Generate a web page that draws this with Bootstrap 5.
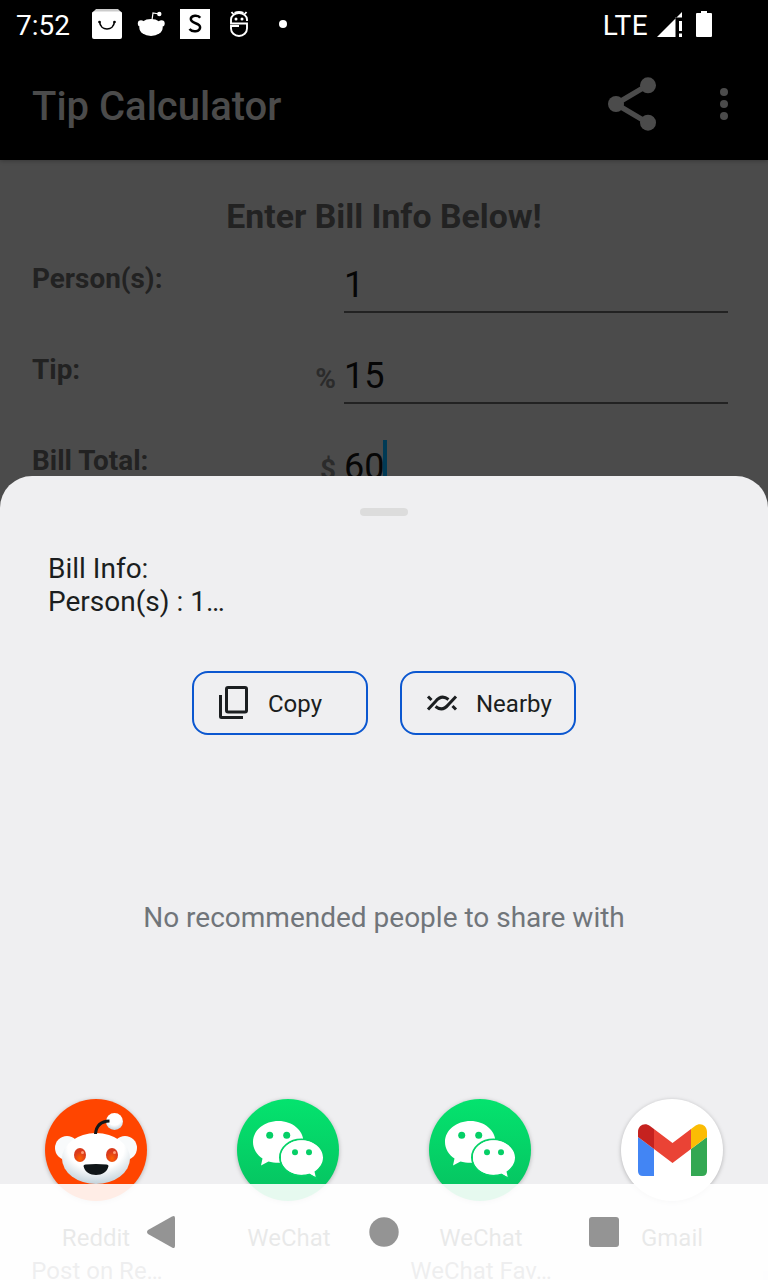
<!DOCTYPE html>
<html lang="en">
<head>
<meta charset="utf-8">
<meta name="viewport" content="width=device-width, initial-scale=1">
<title>Tip Calculator</title>
<link href="https://cdn.jsdelivr.net/npm/bootstrap@5.3.0/dist/css/bootstrap.min.css" rel="stylesheet">
<style>
body{font-family:Roboto,"Noto Sans",sans-serif;margin:0;background:#4b4b4b}
.screen{width:768px;height:1280px;background:#4b4b4b}
.status{height:48px;padding:0 56px 0 16px;font-size:28px;line-height:48px;background:#000}
.status span{padding-top:3px}
.status svg,.appbar svg{display:block;flex:none}
.clock{width:76px}
.network{margin-right:8px;letter-spacing:.4px}
.appbar{height:112px;padding:0 32px;background:#000;color:#4b4b4b;box-shadow:0 1px 4px rgba(0,0,0,.25)}
.appbar h1{font-size:40px;font-weight:500;line-height:48px;margin:6px 0 0}
.bill{padding:37px 40px 0 32px;color:#222}
.bill h2{font-size:33.800px;font-weight:700;line-height:40px;margin:0 -8px 0 0}
.fields{padding-top:6px}
.field{height:91px}
.field label{width:270px;font-size:27.900px;line-height:34px;font-weight:700;padding-top:19px}
.sym{width:42px;font-size:28px;font-weight:700;line-height:44px;padding:23px 8px 0 0;color:#2b2b2b}
.val{height:57px;border-bottom:2px solid #222;font-size:36px;line-height:44px;padding-top:7px;margin-top:13px;color:#060606}
.caret{width:4px;height:52px;background:#003a55;margin:-5px 0 0 -1px}
.sheet{top:476px;height:804px;background:#efeff1;border-radius:32px 32px 0 0;color:#1b1e20}
.grip{width:48px;height:8px;border-radius:4px;background:#dcdcdc;margin-top:32px}
.preview{margin:36px 48px 0;font-size:28px;line-height:33px}
.chips{margin-top:53px;gap:32px}
.chip{width:176px;height:64px;border:2px solid #0b57d0;border-radius:16px;background:none;color:#1b1e20;font-size:24px;line-height:30px;padding:0 0 0 24px;gap:18px}
.chip span{padding-top:2px}
.empty{margin-top:163px;font-size:28px;line-height:40px;color:#70757a}
.apps{margin-top:160px}
.app{width:192px;font-size:24px;line-height:33px;white-space:nowrap}
.app svg{display:block;margin-bottom:20px;overflow:visible;filter:drop-shadow(0 1px 2px rgba(0,0,0,.25))}
.wechat{padding-left:2px}
.sub{color:#50555a;line-height:18px;margin:7px 0 0 2px}
.navkeys{height:96px;background:rgba(255,255,255,.9)}
</style>
</head>
<body>
<main class="screen position-relative overflow-hidden">
  <header class="status d-flex align-items-center text-white">
    <span class="clock">7:52</span>
    <svg width="200" height="48" viewBox="92 0 200 48" fill="#fff">
      <path d="M96 9h22l4 4v7H92v-7z" fill="#ccc"/><rect x="92" y="11.500" width="30" height="27.500" rx="2"/>
      <path d="M99.500 21.500c1 10 14 10 15 0" fill="none" stroke="#000" stroke-width="1.700"/><circle cx="99.500" cy="22" r="1.300" fill="#000"/><circle cx="114.500" cy="22" r="1.300" fill="#000"/>
      <ellipse cx="151" cy="27.500" rx="11.700" ry="8.500"/><circle cx="141" cy="23.500" r="3.200"/><circle cx="161.500" cy="23.500" r="3.200"/><circle cx="159.300" cy="14" r="2.200"/><path d="M152 20l1-7 6 1" fill="none" stroke="#fff" stroke-width="1.200"/>
      <path d="M180 9h30v30h-30z"/><path d="M200.200 17.700c-2-3-9.400-2.700-9.400 1.400 0 5 9.300 3.400 9.300 8.200 0 4.800-8.100 5.100-10.600 1.800" fill="none" stroke="#000" stroke-width="2.500"/>
      <g fill="none" stroke="#fff" stroke-width="1.900"><path d="M239 26h-8v2.500a8 7.500 0 0 0 16 0v-5h-16v-4a8 6.500 0 0 1 16 0v1.500M231.500 12l2.500 3M246.500 12l-2.500 3M234.500 12.800q4.500-1.500 9 0"/></g><circle cx="236" cy="19" r="1.500"/><circle cx="242" cy="19" r="1.500"/>
      <circle cx="283" cy="24" r="4"/>
    </svg>
    <span class="network ms-auto">LTE</span>
    <svg width="56" height="48" viewBox="656 0 56 48" fill="#fff"><path d="M657 37l25-25v5.500h-6.500V37zM679 21h3v10h-3zM679 33.500h3V37h-3zM701 11h6v2h4q1 0 1 1v22q0 1-1 1h-14q-1 0-1-1V14q0-1 1-1h4z"/></svg>
  </header>
  <nav class="appbar d-flex align-items-center position-relative">
    <h1>Tip Calculator</h1>
    <svg class="ms-auto" width="128" height="64" viewBox="608 72 128 64" fill="#4b4b4b"><path d="M648 85l-32 19 32 19" fill="none" stroke="#4b4b4b" stroke-width="5.500"/><circle cx="648" cy="85.300" r="8"/><circle cx="616" cy="104" r="8"/><circle cx="648" cy="122.700" r="8"/><circle cx="724" cy="92" r="4"/><circle cx="724" cy="104" r="4"/><circle cx="724" cy="116" r="4"/></svg>
  </nav>
  <section class="bill">
    <h2 class="text-center">Enter Bill Info Below!</h2>
    <div class="fields">
      <div class="field d-flex align-items-start"><label>Person(s):</label><span class="sym"></span><div class="val flex-fill">1</div></div>
      <div class="field d-flex align-items-start"><label>Tip:</label><span class="sym text-end">%</span><div class="val flex-fill">15</div></div>
      <div class="field d-flex align-items-start"><label>Bill Total:</label><span class="sym text-end">$</span><div class="val flex-fill d-flex">60<i class="caret"></i></div></div>
    </div>
  </section>

  <section class="sheet position-absolute start-0 w-100 d-flex flex-column">
    <div class="grip align-self-center flex-shrink-0"></div>
    <div class="preview">Bill Info:<br>Person(s) : 1…</div>
    <div class="chips d-flex justify-content-center">
      <button class="chip d-flex align-items-center"><svg width="32" height="36" viewBox="0 0 32 36" fill="none" stroke="#1b1e20" stroke-width="3"><rect x="8.500" y="2.500" width="20" height="24.500" rx="1.500"/><path d="M2.500 10v21.500q0 1 1 1H25"/></svg><span>Copy</span></button>
      <button class="chip d-flex align-items-center"><svg width="32" height="32" viewBox="0 0 32 32" fill="none" stroke="#1b1e20" stroke-width="3"><path d="M2 22.500L9.500 14.500Q15.500 7 22.500 12.500M30 9.500L22.500 17.500Q16.500 25 9.500 19.500M2 9.500l3.500 3.500M26.500 19l3.500 3.500"/></svg><span>Nearby</span></button>
    </div>
    <p class="empty text-center mb-0">No recommended people to share with</p>
    <div class="apps d-flex text-center">
      <div class="app d-flex flex-column align-items-center">
        <svg width="104" height="104" viewBox="44 1098 104 104"><defs><radialGradient id="snoo" cx=".5" cy=".3" r=".75"><stop offset=".55" stop-color="#fff"/><stop offset="1" stop-color="#b9cbd5"/></radialGradient><radialGradient id="eye" cy=".75"><stop stop-color="#ff6100"/><stop offset="1" stop-color="#d93a1c"/></radialGradient></defs>
        <circle cx="96" cy="1150" r="51" fill="#ff4500"/><circle cx="67" cy="1148" r="12" fill="#f8fafb"/><circle cx="125" cy="1148" r="12" fill="#f8fafb"/><ellipse cx="96" cy="1158.500" rx="34" ry="25.500" fill="url(#snoo)"/><circle cx="114.500" cy="1121.500" r="8.500" fill="url(#snoo)"/><path d="M95.500 1134q1-12.500 14-13" fill="none" stroke="#111719" stroke-width="3"/><ellipse cx="80" cy="1155" rx="6" ry="7" fill="url(#eye)"/><ellipse cx="112" cy="1155" rx="6" ry="7" fill="url(#eye)"/><circle cx="82.500" cy="1152.500" r="1.500" fill="#ff9b75"/><circle cx="114.500" cy="1152.500" r="1.500" fill="#ff9b75"/><path d="M83.500 1166q0-1.500 2-1.500 10.500-.8 21 0 2 0 2 1.500c-2 12-23 12-25 0z" fill="#101618"/></svg>
        <span>Reddit</span><span class="sub">Post on Re…</span>
      </div>
      <div class="app d-flex flex-column align-items-center">
        <svg width="104" height="104" viewBox="236 1098 104 104"><defs><linearGradient id="wc" x2="0" y2="1"><stop stop-color="#04e36e"/><stop offset="1" stop-color="#06c160"/></linearGradient>
        <g id="bubbles"><circle cx="288" cy="1150" r="51" fill="url(#wc)"/><path d="M278.500 1121c-14 0-25.500 9-25.500 21 0 6.500 3.500 12.500 9.500 16.500l-1.500 7 7.500-4c3 1 6.500 1.300 10 1.300 14 0 25-9.300 25-20.800s-11-21-25-21z" fill="#fff"/><path d="M301.500 1139.500c-12 0-21.500 8-21.500 18s9.500 18 21.500 18c3 0 5.500-.4 8-1.200l6.500 3.700-1.300-6c5-3.300 8.300-8.500 8.300-14.500 0-10-9.500-18-21.500-18z" fill="#fff" stroke="#05d267" stroke-width="2"/><path d="M301.500 1140.300c-11.500 0-20.500 7.700-20.500 17.200s9 17.200 20.500 17.200c3 0 5.500-.4 8-1.200l6.200 3.500-1.200-5.500c5-3.300 8.500-8.300 8.500-14 0-9.500-10-17.200-21.500-17.200z" fill="#fff"/><g fill="#05cf66"><circle cx="269.700" cy="1135.300" r="3.500"/><circle cx="286.700" cy="1135.300" r="3.500"/><circle cx="295" cy="1152.300" r="3"/><circle cx="309" cy="1152.300" r="3"/></g></g></defs><use href="#bubbles"/></svg>
        <span class="wechat">WeChat</span>
      </div>
      <div class="app d-flex flex-column align-items-center">
        <svg width="104" height="104" viewBox="236 1098 104 104"><use href="#bubbles"/></svg>
        <span class="wechat">WeChat</span><span class="sub">WeChat Fav…</span>
      </div>
      <div class="app d-flex flex-column align-items-center">
        <svg width="104" height="104" viewBox="620 1098 104 104"><circle cx="672" cy="1150" r="51" fill="#fff"/><path d="M638 1137l16 12v27h-11q-5 0-5-5z" fill="#4285f4"/><path d="M707 1137l-16 12v27h11q5 0 5-5z" fill="#34a853"/><path d="M654 1129l18.500 14 18.500-14v20l-18.500 14-18.500-14z" fill="#ea4335"/><path d="M654 1129v20l-16-12v-5c0-7 7-10 12-6z" fill="#c5221f"/><path d="M691 1129v20l16-12v-5c0-7-7-10-12-6z" fill="#fbbc04"/></svg>
        <span>Gmail</span>
      </div>
    </div>
  </section>

  <footer class="navkeys position-absolute bottom-0 start-0 w-100">
    <svg class="d-block" width="768" height="96" fill="#949494"><path d="M148 46l24-13.500q3-1.500 3 1.500v28q0 3-3 1.500L148 50q-2-2 0-4z"/><circle cx="384" cy="48" r="14.700"/><rect x="589" y="33" width="30" height="30" rx="3"/></svg>
  </footer>
</main>
<script src="https://cdn.jsdelivr.net/npm/bootstrap@5.3.0/dist/js/bootstrap.bundle.min.js"></script>
</body>
</html>
